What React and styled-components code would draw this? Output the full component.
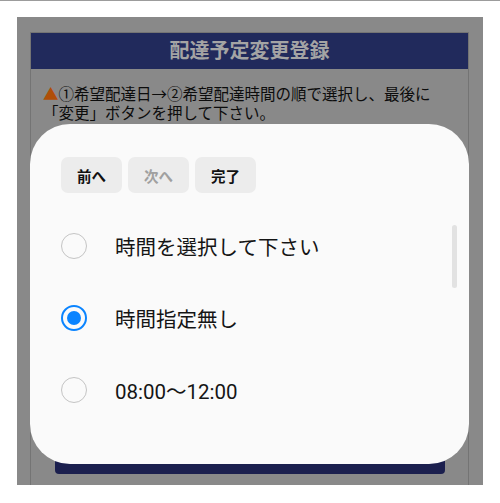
import React from 'react';
import styled, { createGlobalStyle } from 'styled-components';

const GlobalStyle = createGlobalStyle`
    body {
        margin: 0;
        background: #ffffff;
        font-family: Roboto, "Noto Sans CJK JP", sans-serif;
    }
`;

const TopRule = styled.div`
    height: 1px;
    background: #9c9c9c;
`;

// dimmed page behind the bottom sheet
const Screen = styled.div`
    position: relative;
    display: flex;
    box-sizing: border-box;
    height: 468px;
    margin: 16px 17px 0;
    padding: 15px 14px 0 13px;
    background: #898989;
`;

const Panel = styled.div`
    flex: 1;
    display: flex;
    flex-direction: column;
    border: 1px solid #747474;
    border-bottom: none;
`;

const Header = styled.h1`
    margin: 0;
    height: 36px;
    display: flex;
    align-items: center;
    justify-content: center;
    padding-bottom: 3px;
    box-sizing: border-box;
    background: #212a5c;
    color: #a4a4a4;
    font-size: 20px;
    font-weight: 700;
    font-family: "Noto Sans CJK JP", sans-serif;
`;

const Notice = styled.p`
    margin: 0;
    padding: 15px 8px 0 12px;
    font-size: 15.5px;
    line-height: 19px;
    color: #0c0c0c;
    font-family: "Noto Sans CJK JP", sans-serif;
`;

const Mark = styled.span`
    color: #b04e08;
`;

const SubmitBar = styled.div`
    margin: auto 23px 11px 24px;
    height: 40px;
    border-radius: 4px;
    background: #1b1f4e;
`;

const Sheet = styled.div`
    position: absolute;
    left: 13px;
    top: 107px;
    width: 439px;
    height: 340px;
    box-sizing: border-box;
    padding: 33px 31px 0;
    border-radius: 40px;
    background: #fafafa;
`;

const Toolbar = styled.div`
    display: flex;
    gap: 6px;
`;

const ToolButton = styled.button`
    width: 61px;
    height: 36px;
    border: none;
    border-radius: 7px;
    background: #ececec;
    color: ${(p) => (p.disabled ? '#a0a0a0' : '#111111')};
    font-family: "Noto Sans CJK JP", sans-serif;
    font-size: 14.5px;
    font-weight: 700;
    padding: 0;
`;

const OptionList = styled.div`
    margin-top: 17px;
`;

const Option = styled.div`
    height: 72px;
    display: flex;
    align-items: center;
`;

const Radio = styled.span`
    position: relative;
    box-sizing: border-box;
    width: 26px;
    height: 26px;
    margin-right: 28px;
    border-radius: 50%;
    border: ${(p) => (p.checked ? '2px solid #0a84ff' : '1.5px solid #c4c4c4')};

    &::after {
        content: '';
        display: ${(p) => (p.checked ? 'block' : 'none')};
        position: absolute;
        left: 4px;
        top: 4px;
        width: 14px;
        height: 14px;
        border-radius: 50%;
        background: #0a84ff;
    }
`;

const Label = styled.span`
    font-size: 20.5px;
    color: #151515;
`;

const ScrollThumb = styled.div`
    position: absolute;
    top: 101px;
    right: 12px;
    width: 5px;
    height: 63px;
    border-radius: 3px;
    background: #e2e2e2;
`;

const options = [
    { label: '時間を選択して下さい', checked: false },
    { label: '時間指定無し', checked: true },
    { label: '08:00〜12:00', checked: false },
];

const App = () => {
    return (
        <>
            <GlobalStyle />
            <TopRule />
            <Screen>
                <Panel>
                    <Header>配達予定変更登録</Header>
                    <Notice>
                        <Mark>▲</Mark>①希望配達日→②希望配達時間の順で選択し、最後に「変更」ボタンを押して下さい。
                    </Notice>
                    <SubmitBar />
                </Panel>
                <Sheet>
                    <Toolbar>
                        <ToolButton>前へ</ToolButton>
                        <ToolButton disabled>次へ</ToolButton>
                        <ToolButton>完了</ToolButton>
                    </Toolbar>
                    <OptionList>
                        {options.map((o) => (
                            <Option key={o.label}>
                                <Radio checked={o.checked} />
                                <Label>{o.label}</Label>
                            </Option>
                        ))}
                    </OptionList>
                    <ScrollThumb />
                </Sheet>
            </Screen>
        </>
    );
};

export default App;
